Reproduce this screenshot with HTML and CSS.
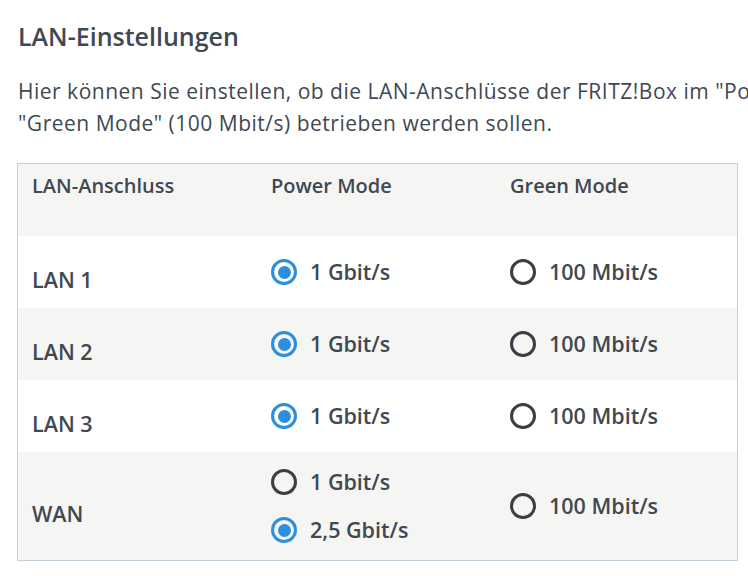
FILE: index.html
```html
<!DOCTYPE html>
<html lang="de">
<head>
<meta charset="utf-8">
<title>LAN-Einstellungen</title>
<link rel="stylesheet" href="styles.css">
</head>
<body>
<main class="page">
  <h1 class="title">LAN-Einstellungen</h1>
  <p class="intro">Hier können Sie einstellen, ob die LAN-Anschlüsse der FRITZ!Box im "Power Mode" (1 Gbit/s) oder im<br>"Green Mode" (100 Mbit/s) betrieben werden sollen.</p>

  <div class="table">
    <div class="row head">
      <div class="cell">LAN-Anschluss</div>
      <div class="cell">Power Mode</div>
      <div class="cell">Green Mode</div>
    </div>
    <div class="row">
      <div class="cell label">LAN 1</div>
      <div class="cell opts"><label class="radio"><span class="dot checked"></span>1 Gbit/s</label></div>
      <div class="cell opts"><label class="radio"><span class="dot"></span>100 Mbit/s</label></div>
    </div>
    <div class="row alt">
      <div class="cell label">LAN 2</div>
      <div class="cell opts"><label class="radio"><span class="dot checked"></span>1 Gbit/s</label></div>
      <div class="cell opts"><label class="radio"><span class="dot"></span>100 Mbit/s</label></div>
    </div>
    <div class="row">
      <div class="cell label">LAN 3</div>
      <div class="cell opts"><label class="radio"><span class="dot checked"></span>1 Gbit/s</label></div>
      <div class="cell opts"><label class="radio"><span class="dot"></span>100 Mbit/s</label></div>
    </div>
    <div class="row alt wan">
      <div class="cell label">WAN</div>
      <div class="cell opts">
        <label class="radio"><span class="dot"></span>1 Gbit/s</label>
        <label class="radio"><span class="dot checked"></span>2,5 Gbit/s</label>
      </div>
      <div class="cell opts"><label class="radio"><span class="dot"></span>100 Mbit/s</label></div>
    </div>
  </div>
</main>
</body>
</html>
```
FILE: styles.css
```css
html, body {
  margin: 0;
  padding: 0;
  background: #ffffff;
  overflow: hidden;
}
body {
  font-family: "Open Sans", "Noto Sans", sans-serif;
  color: #404852;
}
.page {
  width: 1200px;
  padding: 18px 0 0 18px;
}
.title {
  margin: 0;
  font-size: 25px;
  font-weight: 600;
  line-height: 36px;
}
.intro {
  margin: 21px 0 24px;
  font-size: 21px;
  letter-spacing: 0.5px;
  line-height: 32px;
  white-space: nowrap;
}
.table {
  margin-left: -1px;
  width: 719px;
  border: 1px solid #c4d0da;
}
.row {
  display: grid;
  grid-template-columns: 239px 239px 1fr;
  min-height: 72px;
  background: #ffffff;
}
.row.head, .row.alt {
  background: #f5f5f3;
}
.cell {
  padding: 0 14px;
  display: flex;
  align-items: center;
  font-size: 21.5px;
  font-weight: 650;
}
.head .cell {
  align-items: flex-start;
  padding-top: 8px;
  font-size: 20px;
  font-weight: 600;
}
.label {
  padding-top: 14px;
}
.opts {
  flex-direction: column;
  justify-content: center;
  align-items: flex-start;
  gap: 22px;
}
.wan {
  min-height: 108px;
}
.radio {
  display: flex;
  align-items: center;
  gap: 13px;
  line-height: 26px;
}
.dot {
  box-sizing: border-box;
  width: 26px;
  height: 26px;
  border: 3px solid #3a3f45;
  border-radius: 50%;
  display: flex;
  align-items: center;
  justify-content: center;
}
.dot.checked {
  border-color: #2b8ede;
}
.dot.checked::after {
  content: "";
  width: 13px;
  height: 13px;
  border-radius: 50%;
  background: #2b8ede;
}
```
